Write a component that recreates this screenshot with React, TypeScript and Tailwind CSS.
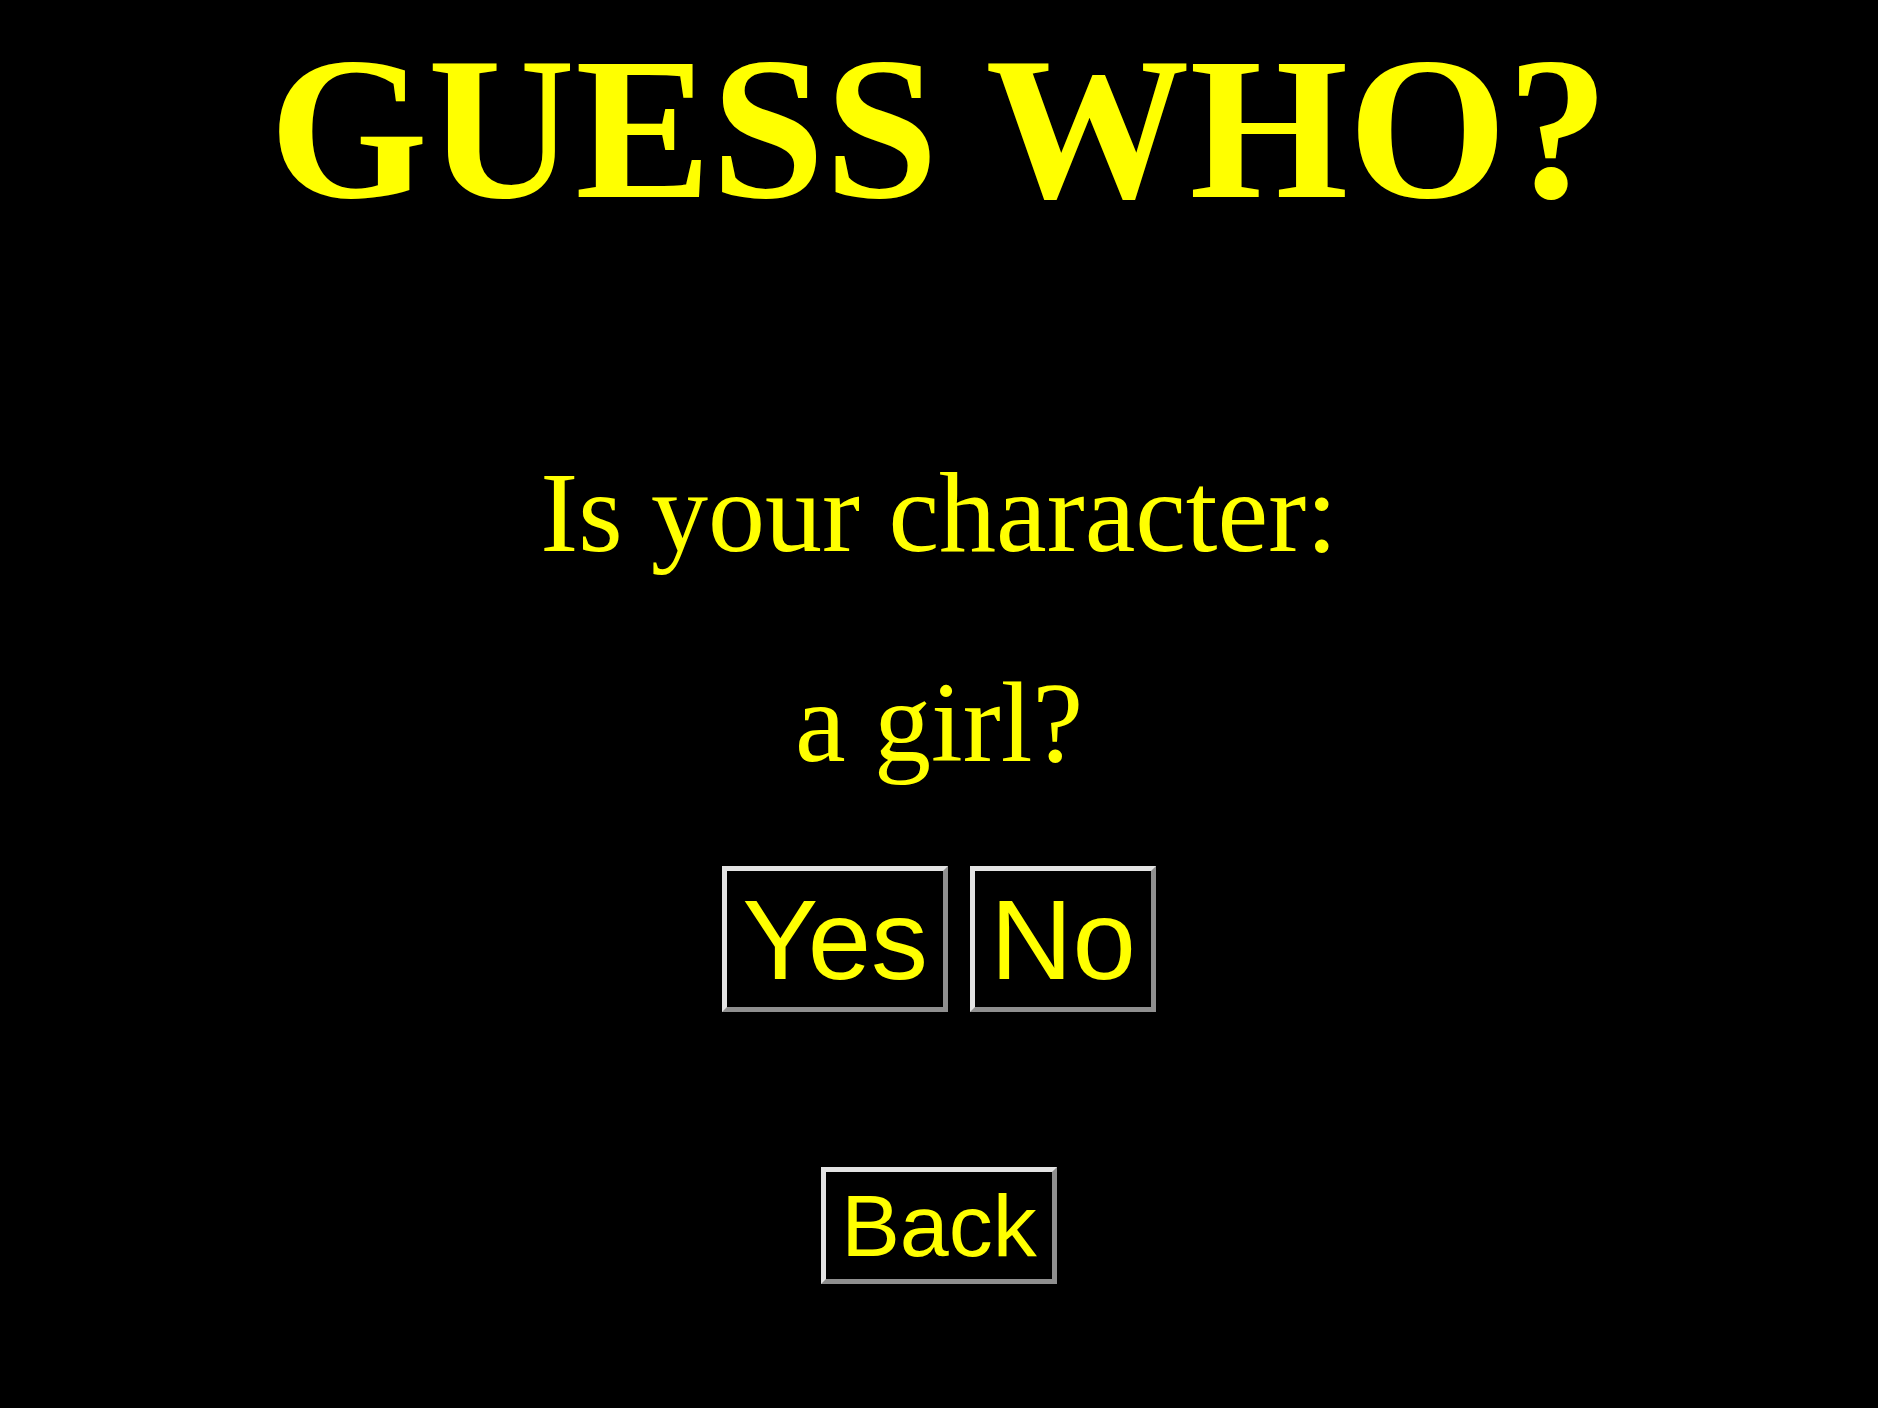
const btn =
  "border-[5px] border-solid border-t-[#e3e3e3] border-l-[#e3e3e3] border-r-[#8f8f8f] border-b-[#8f8f8f] bg-black text-[#ffff00] font-['Liberation_Sans',Arial,sans-serif] cursor-pointer";

export default function App() {
  return (
    <div className="min-h-screen bg-black flex flex-col items-center text-[#ffff00]">
      {/* Title */}
      <h1 className="mt-[26px] text-[204px] leading-none font-bold font-['Liberation_Serif','Times_New_Roman',serif] whitespace-nowrap">
        GUESS WHO?
      </h1>

      {/* Question */}
      <p className="mt-[226px] text-[114px] leading-none font-['Liberation_Serif','Times_New_Roman',serif] whitespace-nowrap">
        Is your character:
      </p>
      <p className="mt-[96px] text-[114px] leading-none font-['Liberation_Serif','Times_New_Roman',serif] whitespace-nowrap">
        a girl?
      </p>

      {/* Answers */}
      <div className="mt-[86px] flex gap-[22px]">
        <button className={`${btn} text-[114px] leading-[131px] px-[15px] py-[2.5px]`}>Yes</button>
        <button className={`${btn} text-[114px] leading-[131px] px-[15px] py-[2.5px]`}>No</button>
      </div>

      <button className={`${btn} mt-[155px] text-[88px] leading-[101px] px-[15px] py-[3px]`}>
        Back
      </button>
    </div>
  );
}
